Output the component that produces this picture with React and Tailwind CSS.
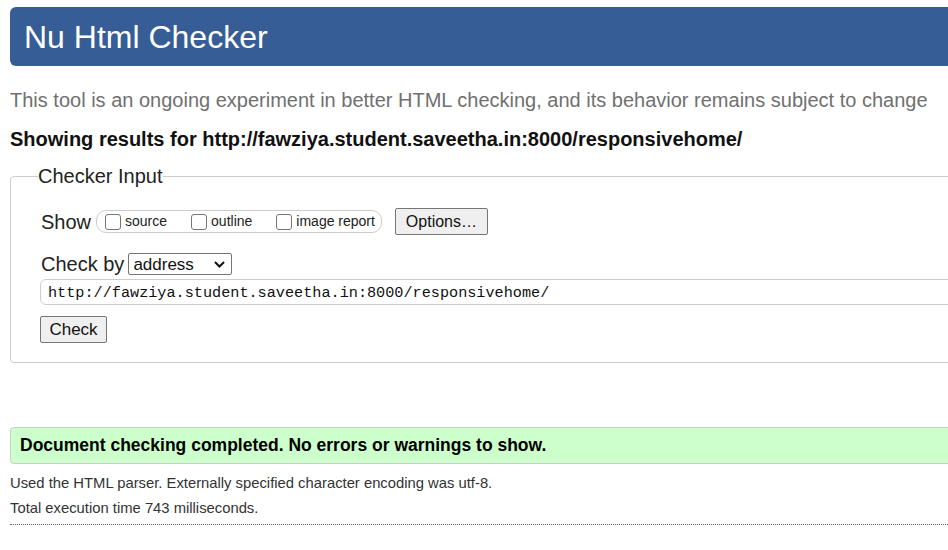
import React from "react";

const Box = ({ label }) => (
  <label className="flex items-center">
    <input
      type="checkbox"
      className="appearance-none w-4 h-4 rounded-[3px] border border-[#767676] bg-white"
    />
    <span className="ml-[4px] text-[14px] text-[#222]">{label}</span>
  </label>
);

const App = () => {
  const url = "http://fawziya.student.saveetha.in:8000/responsivehome/";

  return (
    <div
      className="w-[948px] h-[550px] overflow-hidden bg-white text-[#111]"
      style={{ fontFamily: '"Liberation Sans", Arial, sans-serif' }}
    >
      <div className="w-[1000px] pl-[10px]">
        <h1 className="mt-[7px] h-[59px] rounded-l-[6px] bg-[#365d95] pl-[14px] flex items-center text-[32px] text-white">
          Nu Html Checker
        </h1>

        <p className="mt-[22px] text-[20px] leading-[24px] text-[#707070]">
          This tool is an ongoing experiment in better HTML checking, and its
          behavior remains subject to change
        </p>

        <p className="mt-[15px] text-[20px] leading-[24px] font-bold text-[#111]">
          Showing results for {url}
        </p>

        <fieldset className="mt-[13px] border border-[#ccc] rounded-[4px] pl-[30px] pb-[19px]">
          <legend className="-ml-[3px] text-[20px] leading-[24px] text-[#222]">
            Checker Input
          </legend>

          <div className="mt-[20px] flex items-center h-[27px]">
            <span className="text-[20px] text-[#222]">Show</span>
            <div className="ml-[5px] h-[23px] pl-[8px] pr-[6px] rounded-[10px] border border-[#ccc] flex items-center gap-[24px]">
              <Box label="source" />
              <Box label="outline" />
              <Box label="image report" />
            </div>
            <button className="ml-[13px] w-[93px] h-[27px] bg-[#efefef] border border-[#767676] rounded-[2px] text-[16px] text-[#111]">
              Options…
            </button>
          </div>

          <div className="mt-[17px] flex items-center h-[24px]">
            <span className="text-[20px] text-[#222]">Check by</span>
            <div className="ml-[4px] w-[104px] h-[22px] border border-[#767676] rounded-[2px] flex items-center justify-between pl-[4px] pr-[6px]">
              <span className="text-[17px] leading-none text-[#111]">address</span>
              <svg width="11" height="7" viewBox="0 0 11 7">
                <polyline
                  points="1,1 5.5,5.5 10,1"
                  fill="none"
                  stroke="#111"
                  strokeWidth="2"
                />
              </svg>
            </div>
          </div>

          <div
            className="mt-[3px] -ml-px h-[26px] border border-[#ccc] rounded-[6px] pl-[7px] pt-[2px] flex items-center text-[15.2px] text-[#111]"
            style={{ fontFamily: '"Liberation Mono", "DejaVu Sans Mono", monospace' }}
          >
            {url}
          </div>

          <button className="mt-[11px] -ml-px w-[67px] h-[27px] bg-[#efefef] border border-[#767676] rounded-[2px] text-[17px] text-[#111]">
            Check
          </button>
        </fieldset>

        <div className="mt-[64px] h-[37px] border border-[#ccc] rounded-l-[4px] bg-[#ccffcc] pl-[9px] flex items-center text-[17.5px] font-bold text-black">
          Document checking completed. No errors or warnings to show.
        </div>

        <p className="mt-[7px] text-[14.8px] leading-[25px] text-[#333]">
          Used the HTML parser. Externally specified character encoding was
          utf-8.
        </p>
        <p className="text-[14.8px] leading-[25px] text-[#333]">
          Total execution time 743 milliseconds.
        </p>
        <div className="mt-[3px] border-t border-dotted border-[#666]" />
      </div>
    </div>
  );
};

export default App;
